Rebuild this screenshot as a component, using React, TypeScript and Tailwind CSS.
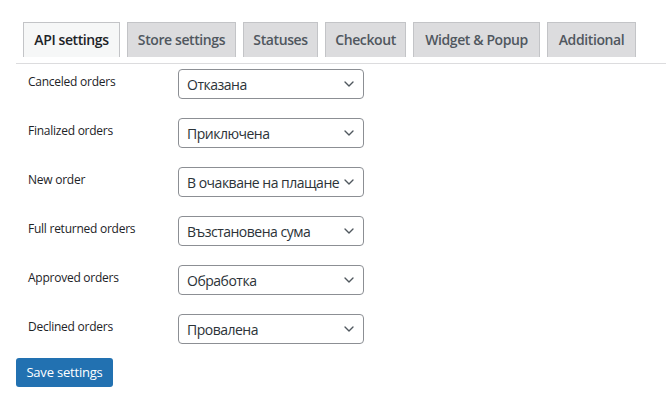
import { ChevronDown } from "lucide-react";

const tabs = [
  { label: "API settings", w: "w-[97px]", active: true },
  { label: "Store settings", w: "w-[109px]" },
  { label: "Statuses", w: "w-[75px]" },
  { label: "Checkout", w: "w-[81px]" },
  { label: "Widget & Popup", w: "w-[127px]" },
  { label: "Additional", w: "w-[89px]" },
];

const rows = [
  { label: "Canceled orders", value: "Отказана" },
  { label: "Finalized orders", value: "Приключена" },
  { label: "New order", value: "В очакване на плащане" },
  { label: "Full returned orders", value: "Възстановена сума" },
  { label: "Approved orders", value: "Обработка" },
  { label: "Declined orders", value: "Провалена" },
];

export default function App() {
  return (
    <div className="min-h-[412px] bg-white pl-4 pt-[22px] font-['Open_Sans',sans-serif]">
      {/* Tabs */}
      <nav className="flex gap-[7px] border-b border-[#dcdcde] pb-[6px] pl-[7px]">
        {tabs.map((t) => (
          <a
            key={t.label}
            className={`${t.w} flex h-[35px] items-center justify-center border border-b-0 border-[#c3c4c7] pb-px text-[14px] font-semibold tracking-[-0.4px] ${
              t.active ? "bg-[#f6f7f7] text-[#1d2327]" : "bg-[#dcdcde] text-[#50575e]"
            }`}
          >
            {t.label}
          </a>
        ))}
      </nav>

      {/* Status mapping */}
      <div className="flex flex-col">
        {rows.map((r) => (
          <div key={r.label} className="flex h-[49px]">
            <div className="w-[162px] pl-3 pt-[9px] text-[12px] tracking-[-0.25px] text-[#1d2327]">
              {r.label}
            </div>
            <div className="pt-[5px]">
              <div className="relative flex h-[30px] w-[186px] items-center overflow-hidden rounded-[4px] border border-[#8c8f94] bg-white pl-2 pr-6">
                <span className="whitespace-nowrap text-[14px] tracking-[-0.5px] text-[#2c3338]">
                  {r.value}
                </span>
                <ChevronDown className="absolute right-[6px] h-4 w-4 text-[#50575e]" strokeWidth={2} />
              </div>
            </div>
          </div>
        ))}
      </div>

      <button className="h-[29px] w-[97px] rounded-[3px] bg-[#2271b1] text-[13px] tracking-[-0.2px] text-white">
        Save settings
      </button>
    </div>
  );
}
